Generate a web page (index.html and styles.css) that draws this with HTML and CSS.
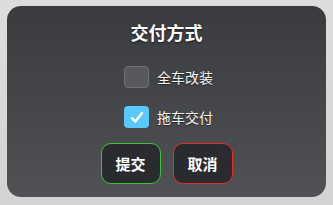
FILE: index.html
```html
<!DOCTYPE html>
<html>
<head>
  <meta charset="utf-8">
  <title>交付方式</title>
  <link rel="stylesheet" href="styles.css">
</head>
<body>
  <div class="panel">
    <h1 class="title">交付方式</h1>

    <label class="option">
      <span class="box"></span>
      <span class="option-text">全车改装</span>
    </label>

    <label class="option">
      <span class="box checked">
        <svg width="14" height="13" viewBox="0 0 14 13">
          <path d="M2 7.2 L5.4 10.6 L12 2" fill="none" stroke="#fff" stroke-width="2.4" stroke-linecap="round" stroke-linejoin="round"/>
        </svg>
      </span>
      <span class="option-text">拖车交付</span>
    </label>

    <div class="actions">
      <button class="button ok">提交</button>
      <button class="button cancel">取消</button>
    </div>
  </div>
</body>
</html>
```

FILE: styles.css
```css
html, body {
  margin: 0;
  padding: 0;
  height: 100%;
}

body {
  box-sizing: border-box;
  padding: 6px 7px 8px 7px;
  background: linear-gradient(180deg, #dcdddd 0%, #d2d3d3 100%);
  font-family: "Noto Sans CJK SC", "Noto Sans", sans-serif;
}

.panel {
  height: 191px;
  box-sizing: border-box;
  padding: 14px 0 13px 0;
  border-radius: 14px;
  background: linear-gradient(180deg, #3a3b3f 0%, #45464a 50%, #515256 100%);
  display: flex;
  flex-direction: column;
  align-items: center;
}

.title {
  margin: 0 0 22px 0;
  font-size: 18px;
  line-height: 24px;
  font-weight: bold;
  color: #fff;
  text-shadow: 0 1px 2px rgba(0, 0, 0, 0.6);
}

.option {
  display: flex;
  align-items: center;
  gap: 8px;
  height: 22px;
  margin-bottom: 18px;
  margin-left: 4px;
}

.option + .option + .actions {
  margin-top: -3px;
}

.box {
  width: 25px;
  height: 22px;
  box-sizing: border-box;
  border-radius: 4px;
  border: 1px solid #707175;
  background: #58595d;
  display: flex;
  align-items: center;
  justify-content: center;
}

.box.checked {
  border: none;
  background: #5ac8fa;
}

.option-text {
  font-size: 14px;
  color: #f2f2f2;
  text-shadow: 0 1px 1px rgba(0, 0, 0, 0.5);
}

.actions {
  display: flex;
  gap: 12px;
}

.button {
  width: 60px;
  height: 41px;
  border-radius: 10px;
  background: #2a2b2f;
  color: #fff;
  font-family: inherit;
  font-size: 15px;
  font-weight: bold;
  padding: 0;
  cursor: pointer;
}

.ok {
  border: 1px solid #3ec23e;
}

.cancel {
  border: 1px solid #e0302a;
}
```
